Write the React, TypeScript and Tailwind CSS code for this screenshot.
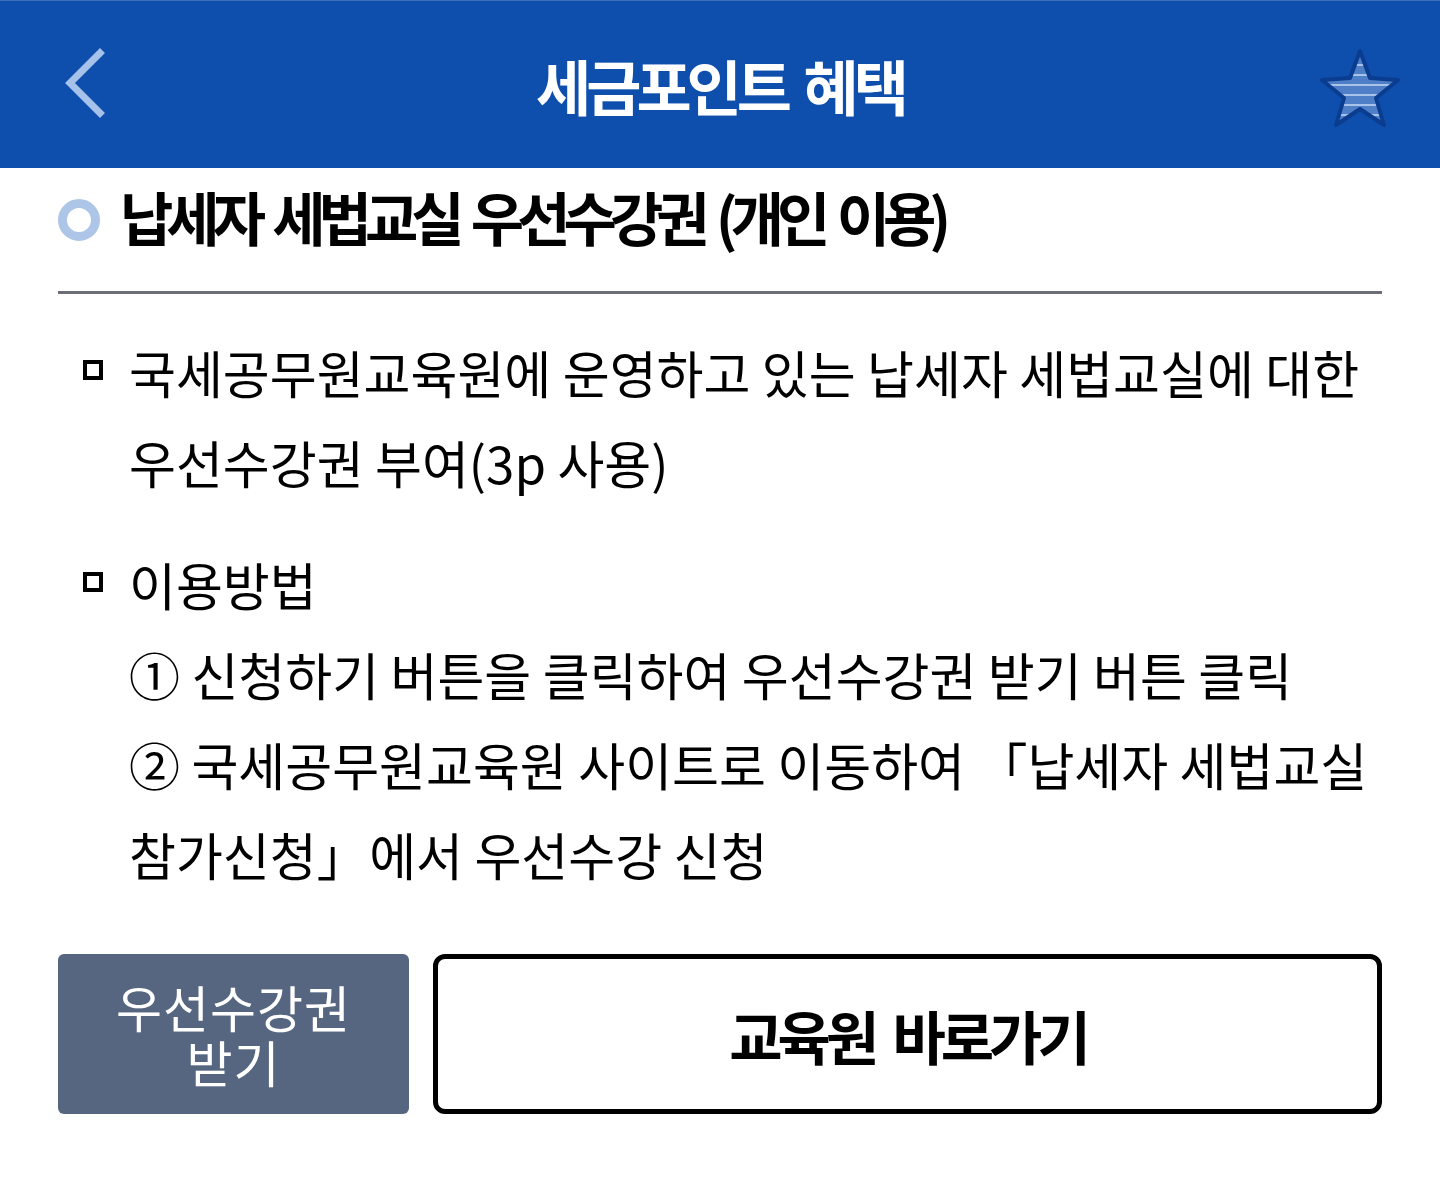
import React from "react";

const FONT = { fontFamily: '"Noto Sans CJK KR", "Noto Sans", sans-serif' };

function BackIcon() {
  return (
    <svg width="50" height="76" viewBox="0 0 50 76" className="block">
      <polyline
        points="38,6 8,36 38,66"
        fill="none"
        stroke="#a6c1ea"
        strokeWidth="7"
        strokeLinecap="square"
        strokeLinejoin="miter"
      />
    </svg>
  );
}

function StarIcon() {
  return (
    <svg width="84" height="82" viewBox="0 0 84 82" className="mt-[6px] block">
      <defs>
        <pattern id="stripes" width="84" height="10" patternUnits="userSpaceOnUse">
          <rect width="84" height="10" fill="#4f7fc6" />
          <rect y="7" width="84" height="2" fill="#a8c2ea" />
        </pattern>
      </defs>
      <polygon
        points="42,4 52,31 80,33 58,51 66,78 42,62 18,78 26,51 4,33 32,31"
        fill="url(#stripes)"
        stroke="#0a3d8f"
        strokeWidth="4"
        strokeLinejoin="round"
      />
    </svg>
  );
}

function Bullet() {
  return <span className="mt-[33px] block h-[20px] w-[20px] shrink-0 border-[4px] border-black" />;
}

export default function App() {
  return (
    <div className="min-h-[1180px] w-[1440px] bg-white" style={FONT}>
      {/* top bar */}
      <header className="grid h-[168px] grid-cols-[1fr_auto_1fr] items-center border-t border-[#3d6dbb] bg-[#0e4fae]">
        <div className="pl-[62px]">
          <BackIcon />
        </div>
        <h1 className="text-[60px] font-bold leading-none tracking-[-5px] text-white [word-spacing:8px]">
          세금포인트 혜택
        </h1>
        <div className="flex justify-end pr-[38px]">
          <StarIcon />
        </div>
      </header>

      <main className="px-[58px]">
        {/* section heading */}
        <div className="flex h-[126px] items-center gap-[20px] border-b-[3px] border-[#6b6e76] pb-[19px]">
          <span className="block h-[42px] w-[42px] shrink-0 rounded-full border-[9px] border-[#adc6e8]" />
          <h2 className="mb-[8px] text-[58px] font-bold leading-none tracking-[-7px] text-black [word-spacing:7px]">
            납세자 세법교실 우선수강권 (개인 이용)
          </h2>
        </div>

        {/* description */}
        <div className="pt-[33px] text-[51px] leading-[90px] tracking-[0px] text-black">
          <div className="flex gap-[26px] pl-[25px]">
            <Bullet />
            <p>
              국세공무원교육원에 운영하고 있는 납세자 세법교실에 대한
              <br />
              우선수강권 부여(3p 사용)
            </p>
          </div>
          <div className="mt-[32px] flex gap-[26px] pl-[25px]">
            <Bullet />
            <p>
              이용방법
              <br />① 신청하기 버튼을 클릭하여 우선수강권 받기 버튼 클릭
              <br />② 국세공무원교육원 사이트로 이동하여 「납세자 세법교실
              <br />
              참가신청」<span className="[word-spacing:-10px]"> </span>에서 우선수강 신청
            </p>
          </div>
        </div>

        {/* actions */}
        <div className="mt-[55px] flex gap-[24px]">
          <button className="flex h-[160px] w-[351px] flex-col items-center justify-center rounded-[6px] bg-[#566580] text-[50px] tracking-[1px] text-white">
            <span className="block leading-[55px]">우선수강권</span>
            <span className="block leading-[55px]">받기</span>
          </button>
          <button className="flex h-[160px] flex-1 items-center justify-center rounded-[12px] border-[5px] border-black bg-white pt-[2px] text-[58px] font-bold leading-none tracking-[-5px] text-black [word-spacing:10px]">
            교육원 바로가기
          </button>
        </div>
      </main>
    </div>
  );
}
